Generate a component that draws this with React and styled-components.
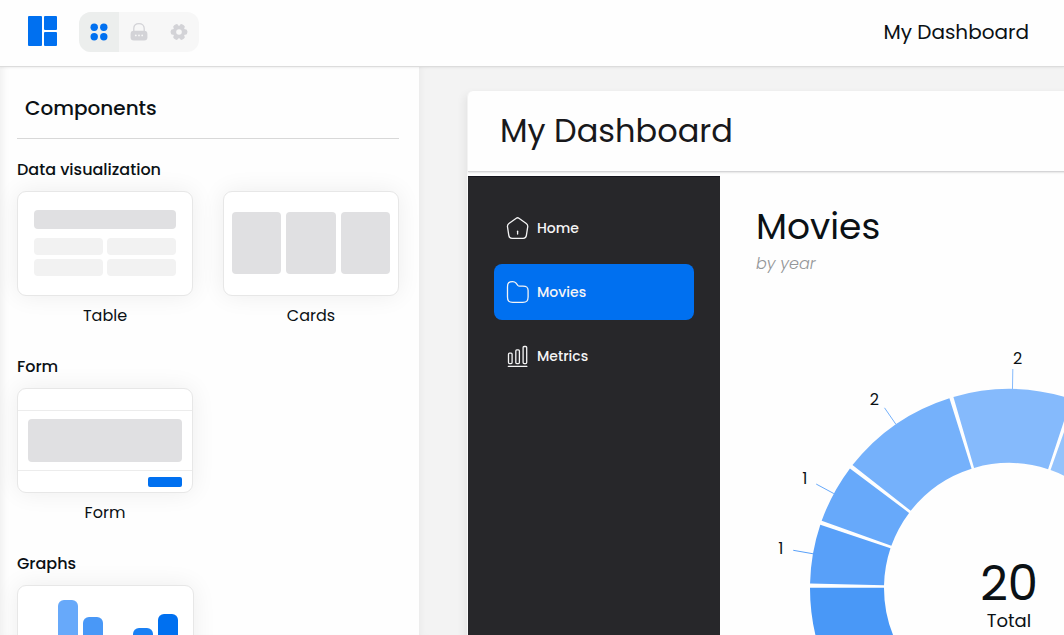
import React from "react";
import styled, { createGlobalStyle } from "styled-components";

const GlobalStyle = createGlobalStyle`
  *, *::before, *::after { box-sizing: border-box; }
  body {
    margin: 0;
    background: #f3f3f3;
    color: #0b1115;
    font-family: Poppins, Inter, "Open Sans", sans-serif;
    overflow: hidden;
  }
  h1, h2, h3, p, ul, figure { margin: 0; padding: 0; }
`;

const Page = styled.div`
  display: flex;
  flex-direction: column;
  height: 100vh;
`;

const TopBar = styled.header`
  display: flex;
  align-items: center;
  flex: none;
  height: 67px;
  padding: 0 35px 3px 28px;
  background: #fefefe;
  border-bottom: 1px solid #dcdcdc;
  box-shadow: 0 1px 2px rgba(0, 0, 0, 0.06);
  z-index: 1;
`;

const Logo = styled.a`
  display: flex;
  margin-right: 21px;
`;

const Toolbar = styled.div`
  display: flex;
  overflow: hidden;
  border-radius: 12px;
  background: #f7f7f7;
`;

const ToolButton = styled.button`
  display: grid;
  place-items: center;
  width: 40px;
  height: 40px;
  padding: 0;
  border: 0;
  color: ${(p) => (p.$active ? "#0070f0" : "#d3d3d7")};
  background: ${(p) => (p.$active ? "#eceeed" : "transparent")};
`;

const ProjectName = styled.p`
  margin-left: auto;
  font-size: 20px;
  line-height: 30px;
`;

const Workspace = styled.div`
  display: flex;
  flex: 1;
  min-height: 0;
`;

const Sidebar = styled.aside`
  flex: none;
  width: 419px;
  padding: 25px 20px 0 17px;
  overflow: hidden;
  background: #fefefe;
  box-shadow: inset 8px 0 8px -6px rgba(0, 0, 0, 0.07);
`;

const SidebarTitle = styled.h2`
  margin-bottom: 19px;
  padding: 0 8px 14px;
  border-bottom: 1px solid #d8d8d8;
  font-size: 20px;
  font-weight: 500;
  line-height: 32px;
`;

const Section = styled.section`
  margin-bottom: 27px;
`;

const SectionTitle = styled.h3`
  margin-bottom: 9px;
  font-size: 16px;
  font-weight: 500;
  line-height: 24px;
`;

const Tiles = styled.div`
  display: grid;
  grid-template-columns: 1fr 1fr;
  gap: 30px;
`;

const Tile = styled.figure`
  display: flex;
  flex-direction: column;
`;

const TileLabel = styled.figcaption`
  margin-top: 8px;
  font-size: 16px;
  line-height: 24px;
  text-align: center;
`;

const Preview = styled.div`
  height: 105px;
  border: 1px solid #e7e7e7;
  border-radius: 9px;
  background: #fff;
  box-shadow: 0 0 24px rgba(0, 0, 0, 0.07);
  overflow: hidden;
`;

const TablePreview = styled(Preview)`
  display: flex;
  flex-direction: column;
  gap: 9px;
  padding: 18px 16px;
`;

const TableHead = styled.span`
  height: 19px;
  border-radius: 4px;
  background: #e0e0e2;
`;

const TableCells = styled.div`
  display: grid;
  grid-template-columns: 1fr 1fr;
  grid-auto-rows: 17px;
  gap: 4px;
`;

const TableCell = styled.span`
  border-radius: 4px;
  background: #f2f2f2;
`;

const CardsPreview = styled(Preview)`
  display: grid;
  grid-template-columns: repeat(3, 1fr);
  gap: 5px;
  padding: 20px 8px 21px;
`;

const Block = styled.span`
  border-radius: 4px;
  background: #e0e0e2;
`;

const FormPreview = styled(Preview)`
  display: grid;
  grid-template-rows: 21px 1fr 21px;
`;

const FormBody = styled.div`
  display: grid;
  padding: 8px 10px;
  border: solid #ececec;
  border-width: 1px 0;
`;

const FormFooter = styled.div`
  display: flex;
  justify-content: flex-end;
  align-items: center;
  padding: 0 10px;
`;

const Submit = styled.span`
  width: 34px;
  height: 10px;
  border-radius: 2px;
  background: #0070f0;
`;

const GraphPreview = styled(Preview)`
  display: flex;
  align-items: flex-end;
  gap: 5px;
  padding: 0 15px 16px;
`;

const Bar = styled.span`
  width: 20px;
  height: ${(p) => p.$size}px;
  border-radius: 6px 6px 0 0;
  background: ${(p) => p.$color};
`;

const Canvas = styled.main`
  flex: 1;
  min-width: 0;
  padding: 24px 0 0 48px;
  overflow: hidden;
  box-shadow: inset 6px 0 8px -6px rgba(0, 0, 0, 0.06);
`;

const Dashboard = styled.article`
  display: flex;
  flex-direction: column;
  gap: 4px;
  min-width: 832px;
  min-height: 100%;
  border-left: 1px solid #f9f9f9;
  border-radius: 6px 0 0 0;
  background: #fefefe;
  box-shadow: -3px 3px 8px rgba(0, 0, 0, 0.06);
`;

const DashboardHeader = styled.header`
  padding: 16px 32px;
  border-bottom: 1px solid #d5d5d7;
  border-radius: 6px 0 0 0;
  box-shadow: 0 1px 2px rgba(0, 0, 0, 0.1);
`;

const DashboardTitle = styled.h1`
  color: #18181b;
  font-size: 32px;
  font-weight: 400;
  line-height: 48px;
`;

const DashboardBody = styled.div`
  display: flex;
  flex: 1;
`;

const Nav = styled.nav`
  display: flex;
  flex-direction: column;
  gap: 8px;
  flex: none;
  width: 252px;
  min-height: 480px;
  padding: 23px 26px;
  background: #27272a;
  border-top: 1px solid #14141c;
`;

const NavLink = styled.a`
  display: flex;
  align-items: center;
  gap: 7px;
  height: 56px;
  padding: 0 12px;
  border-radius: 8px;
  color: #f4f4f5;
  background: ${(p) => (p.$active ? "#0070f0" : "transparent")};
  font-size: 14px;
  font-weight: 500;
  line-height: 20px;
  text-decoration: none;
`;

const ChartPanel = styled.section`
  flex: 1;
  padding-top: 24px;
`;

const ChartTitle = styled.h2`
  padding-left: 36px;
  font-size: 36px;
  font-weight: 400;
  line-height: 54px;
`;

const ChartSubtitle = styled.p`
  padding-left: 36px;
  color: #949698;
  font-size: 16px;
  font-style: italic;
  font-weight: 300;
  line-height: 20px;
`;

const Chart = styled.svg`
  display: block;
  margin-top: 64px;
  overflow: visible;
`;

const SliceLabel = styled.text`
  fill: #0b1115;
  font-size: 16px;
`;

const TotalLabel = styled.text`
  fill: #0b1115;
  font-size: 18px;
`;

const TotalValue = styled.text`
  fill: #0b1115;
  font-size: 48px;
`;

const CENTER = { x: 289, y: 250 };
const OUTER = 199;
const INNER = 125;
const PADDING = 1.2;

const SLICES = [
  { value: 1, color: "#58a0f9" },
  { value: 1, color: "#67a9fa" },
  { value: 2, color: "#75b1fb" },
  { value: 2, color: "#85bafc" },
  { value: 1, color: "#94c3fc" },
  { value: 2, color: "#a3ccfd" },
  { value: 1, color: "#b2d4fd" },
  { value: 2, color: "#0062d2" },
  { value: 1, color: "#006ae2" },
  { value: 2, color: "#0070f0" },
  { value: 1, color: "#1a80f4" },
  { value: 2, color: "#2f8bf6" },
  { value: 2, color: "#4998f7" },
];

const TOTAL = SLICES.reduce((sum, slice) => sum + slice.value, 0);
const UNIT = (360 - SLICES.length * PADDING) / TOTAL;

/* Angles run clockwise from the nine o'clock position. */
function point(angle, radius) {
  const a = (angle * Math.PI) / 180;
  return [CENTER.x - Math.cos(a) * radius, CENTER.y - Math.sin(a) * radius];
}

function slicePath(start, end) {
  const o1 = point(start, OUTER);
  const o2 = point(end, OUTER);
  const i2 = point(end, INNER);
  const i1 = point(start, INNER);
  return `M${o1} A${OUTER} ${OUTER} 0 0 1 ${o2} L${i2} A${INNER} ${INNER} 0 0 0 ${i1} Z`;
}

function Donut() {
  let angle = 1.3;
  return (
    <Chart width="580" height="500" viewBox="0 0 580 500" role="img" aria-label="Movies by year">
      {SLICES.map((slice, i) => {
        const start = angle;
        const end = start + slice.value * UNIT;
        const mid = (start + end) / 2;
        angle = end + PADDING;
        const [x1, y1] = point(mid, OUTER);
        const [x2, y2] = point(mid, OUTER + 20);
        const [tx, ty] = point(mid, OUTER + 30);
        return (
          <g key={i}>
            <path d={slicePath(start, end)} fill={slice.color} />
            <line x1={x1} y1={y1} x2={x2} y2={y2} stroke={slice.color} />
            <SliceLabel x={tx} y={ty + 5} textAnchor={tx > CENTER.x ? "start" : "end"}>
              {slice.value}
            </SliceLabel>
          </g>
        );
      })}
      <TotalValue x={CENTER.x} y="262" textAnchor="middle">{TOTAL}</TotalValue>
      <TotalLabel x={CENTER.x} y="289" textAnchor="middle">Total</TotalLabel>
    </Chart>
  );
}

const LogoMark = () => (
  <svg width="30" height="32" viewBox="0 0 30 32" fill="#0070f0">
    <rect width="14" height="30" rx="1" />
    <rect x="16" width="13" height="14" rx="1" />
    <rect x="16" y="16" width="13" height="14" rx="1" />
  </svg>
);

const DotsIcon = () => (
  <svg width="20" height="20" viewBox="0 0 20 20" fill="currentColor">
    <circle cx="5.2" cy="5.3" r="3.7" />
    <circle cx="14.8" cy="5.3" r="3.7" />
    <circle cx="5.2" cy="14.7" r="3.7" />
    <circle cx="14.8" cy="14.7" r="3.7" />
  </svg>
);

const LockIcon = () => (
  <svg width="20" height="20" viewBox="0 0 20 20">
    <path d="M4.8 10V6.6C4.8 3.4 7 1.7 10 1.7s5.2 1.7 5.2 4.9V10" fill="none" stroke="currentColor" strokeWidth="1.3" />
    <rect x="1.6" y="8.7" width="16.8" height="9.8" rx="3.2" fill="currentColor" />
    <g fill="#f7f7f7">
      <circle cx="6.8" cy="13.4" r="0.9" />
      <circle cx="10" cy="13.4" r="0.9" />
      <circle cx="13.2" cy="13.4" r="0.9" />
    </g>
  </svg>
);

const GearIcon = () => (
  <svg width="20" height="20" viewBox="0 0 20 20">
    <g fill="currentColor">
      {[0, 60, 120].map((a) => (
        <rect key={a} x="1.7" y="7.3" width="16.6" height="5.4" rx="2" transform={`rotate(${a} 10 10)`} />
      ))}
      <circle cx="10" cy="10" r="6.2" />
    </g>
    <circle cx="10" cy="10" r="2.8" fill="#f7f7f7" />
  </svg>
);

const lineIcon = {
  width: 24,
  height: 24,
  viewBox: "0 0 24 24",
  fill: "none",
  stroke: "currentColor",
  strokeWidth: 1.3,
  strokeLinecap: "round",
  strokeLinejoin: "round",
};

const HomeIcon = () => (
  <svg {...lineIcon}>
    <path d="M10.3 2.2 2.9 7.5C1.8 8.3 1.3 9.6 1.5 10.9l1.3 8.5c.2 1.7 1.5 2.9 3.2 2.9h11.2c1.7 0 3-1.2 3.2-2.9l1.3-8.5c.2-1.3-.3-2.6-1.4-3.4l-7.4-5.3c-.8-.6-1.8-.6-2.6 0Z" />
    <path d="M11.6 18v-2.8" />
  </svg>
);

const FolderIcon = () => (
  <svg {...lineIcon}>
    <path d="M22.1 10.6v6.5c0 3.9-1.3 5.2-5.2 5.2H6.7c-3.9 0-5.2-1.3-5.2-5.2V6.8c0-3.9 1.3-5.2 5.2-5.2 1.8 0 2.4.4 3.4 1.6l1.7 2.1c.6.7.9.8 1.9.8h3.2c3.9 0 5.2 1.1 5.2 4.5Z" />
  </svg>
);

const MetricsIcon = () => (
  <svg {...lineIcon}>
    <path d="M2.3 22.3h18.6" />
    <rect x="2.5" y="9.2" width="3.6" height="10.4" rx="1" />
    <rect x="9.8" y="5.9" width="3.6" height="13.7" rx="1" />
    <rect x="17.1" y="2.5" width="3.6" height="17.1" rx="1" />
  </svg>
);

const NAV_ITEMS = [
  { name: "Home", Icon: HomeIcon },
  { name: "Movies", Icon: FolderIcon, active: true },
  { name: "Metrics", Icon: MetricsIcon },
];

const BARS = [
  { size: 26, color: "#94c3fc" },
  { size: 73, color: "#67a9fa" },
  { size: 56, color: "#4998f7" },
  { size: 32, color: "#2f8bf6" },
  { size: 45, color: "#1a80f4" },
  { size: 59, color: "#0070f0" },
];

export default function App() {
  return (
    <>
      <GlobalStyle />
      <Page>
        <TopBar>
          <Logo href="#" aria-label="Start page">
            <LogoMark />
          </Logo>
          <Toolbar>
            <ToolButton type="button" aria-label="Components" $active>
              <DotsIcon />
            </ToolButton>
            <ToolButton type="button" aria-label="Access">
              <LockIcon />
            </ToolButton>
            <ToolButton type="button" aria-label="Settings">
              <GearIcon />
            </ToolButton>
          </Toolbar>
          <ProjectName>My Dashboard</ProjectName>
        </TopBar>
        <Workspace>
          <Sidebar>
            <SidebarTitle>Components</SidebarTitle>
            <Section>
              <SectionTitle>Data visualization</SectionTitle>
              <Tiles>
                <Tile>
                  <TablePreview>
                    <TableHead />
                    <TableCells>
                      <TableCell />
                      <TableCell />
                      <TableCell />
                      <TableCell />
                    </TableCells>
                  </TablePreview>
                  <TileLabel>Table</TileLabel>
                </Tile>
                <Tile>
                  <CardsPreview>
                    <Block />
                    <Block />
                    <Block />
                  </CardsPreview>
                  <TileLabel>Cards</TileLabel>
                </Tile>
              </Tiles>
            </Section>
            <Section>
              <SectionTitle>Form</SectionTitle>
              <Tiles>
                <Tile>
                  <FormPreview>
                    <span />
                    <FormBody>
                      <Block />
                    </FormBody>
                    <FormFooter>
                      <Submit />
                    </FormFooter>
                  </FormPreview>
                  <TileLabel>Form</TileLabel>
                </Tile>
              </Tiles>
            </Section>
            <Section>
              <SectionTitle>Graphs</SectionTitle>
              <Tiles>
                <Tile>
                  <GraphPreview>
                    {BARS.map((bar) => (
                      <Bar key={bar.color} $size={bar.size} $color={bar.color} />
                    ))}
                  </GraphPreview>
                </Tile>
              </Tiles>
            </Section>
          </Sidebar>
          <Canvas>
            <Dashboard>
              <DashboardHeader>
                <DashboardTitle>My Dashboard</DashboardTitle>
              </DashboardHeader>
              <DashboardBody>
                <Nav>
                  {NAV_ITEMS.map(({ name, Icon, active }) => (
                    <NavLink key={name} href="#" $active={active}>
                      <Icon />
                      {name}
                    </NavLink>
                  ))}
                </Nav>
                <ChartPanel>
                  <ChartTitle>Movies</ChartTitle>
                  <ChartSubtitle>by year</ChartSubtitle>
                  <Donut />
                </ChartPanel>
              </DashboardBody>
            </Dashboard>
          </Canvas>
        </Workspace>
      </Page>
    </>
  );
}
